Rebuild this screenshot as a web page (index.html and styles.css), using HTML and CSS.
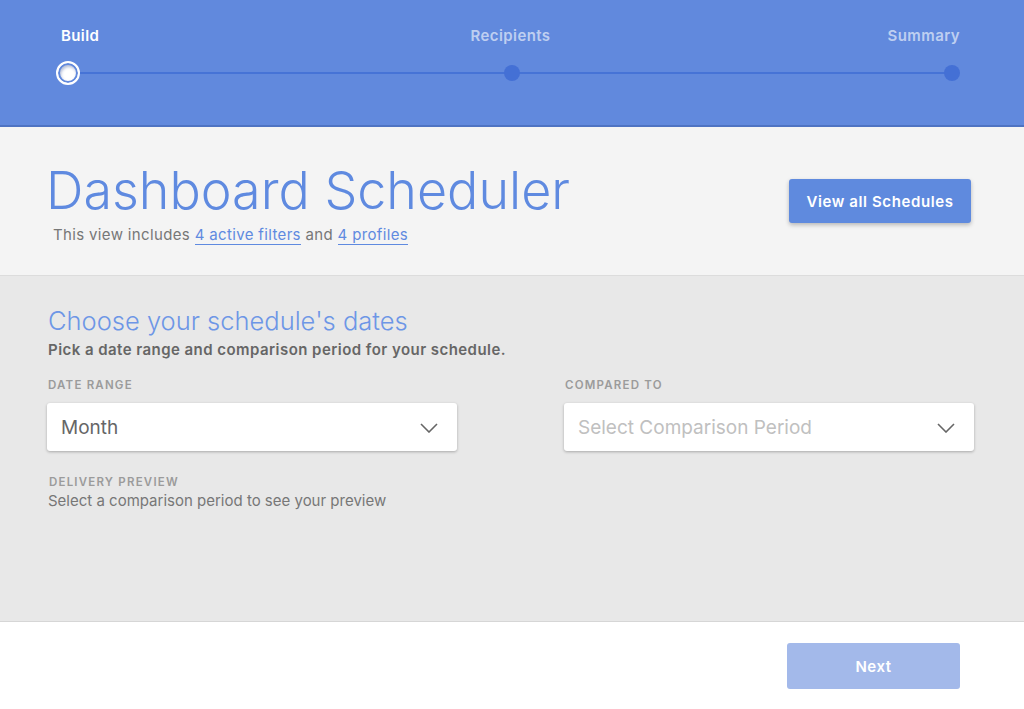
FILE: index.html
```html
<!DOCTYPE html>
<html lang="en">
  <head>
    <meta charset="UTF-8" />
    <meta name="viewport" content="width=device-width, initial-scale=1.0" />
    <title>Dashboard Scheduler</title>
    <link rel="stylesheet" href="styles.css">
  </head>
  <body>
    <!-- Stepper Header -->
    <div class="stepper">
      <div class="step-labels">
        <span class="step-label active">Build</span>
        <span class="step-label">Recipients</span>
        <span class="step-label">Summary</span>
      </div>
      <div class="step-track">
        <span class="step-dot current"></span>
        <span class="step-dot"></span>
        <span class="step-dot"></span>
      </div>
    </div>

    <!-- Title Section -->
    <div class="title-bar">
      <div class="title-text">
        <h1>Dashboard Scheduler</h1>
        <p class="includes">
          This view includes <a href="#">4 active filters</a> and
          <a href="#">4 profiles</a>
        </p>
      </div>
      <button class="btn-primary">View all Schedules</button>
    </div>

    <!-- Dates Section -->
    <div class="dates">
      <h2>Choose your schedule's dates</h2>
      <p class="dates-sub">Pick a date range and comparison period for your schedule.</p>
      <div class="fields">
        <div class="field">
          <label class="field-label">Date Range</label>
          <div class="select">
            <span>Month</span>
            <svg class="chevron" width="18" height="10" viewBox="0 0 18 10">
              <path d="M1 1 L9 9 L17 1" fill="none" stroke="#666" stroke-width="1.6" />
            </svg>
          </div>
        </div>
        <div class="field">
          <label class="field-label">Compared To</label>
          <div class="select placeholder">
            <span>Select Comparison Period</span>
            <svg class="chevron" width="18" height="10" viewBox="0 0 18 10">
              <path d="M1 1 L9 9 L17 1" fill="none" stroke="#666" stroke-width="1.6" />
            </svg>
          </div>
        </div>
      </div>
      <div class="preview">
        <div class="field-label">Delivery Preview</div>
        <p>Select a comparison period to see your preview</p>
      </div>
    </div>

    <!-- Footer -->
    <div class="footer">
      <button class="btn-next">Next</button>
    </div>
  </body>
</html>
```

FILE: styles.css
```css
body {
  font-family: "Inter", "Open Sans", sans-serif;
  margin: 0;
  padding: 0;
  background: #fff;
  color: #666;
  overflow: hidden;
}
.stepper {
  background: #6189dd;
  border-bottom: 2px solid #4e73c2;
  height: 127px;
  padding: 0 64px 0 56px;
  box-sizing: border-box;
  padding-top: 26px;
}
.step-labels {
  display: grid;
  grid-template-columns: 1fr auto 1fr;
  padding-left: 5px;
  height: 20px;
}
.step-labels .step-label:last-child {
  justify-self: end;
}
.step-label {
  font-size: 15px;
  font-weight: 600;
  line-height: 20px;
  letter-spacing: 0.4px;
  color: rgba(255, 255, 255, 0.6);
}
.step-label.active {
  color: #fff;
}
.step-track {
  position: relative;
  display: flex;
  justify-content: space-between;
  align-items: center;
  height: 24px;
  margin-top: 15px;
}
.step-track::before {
  content: "";
  position: absolute;
  left: 12px;
  right: 8px;
  top: 11px;
  height: 2px;
  background: #4673d6;
}
.step-dot {
  position: relative;
  width: 16px;
  height: 16px;
  border-radius: 50%;
  background: #4470d5;
}
.step-dot.current {
  width: 20px;
  height: 20px;
  background: #fff;
  border: 2px solid #fff;
  box-shadow: inset 0 0 0 2px #6189dd, inset 1px 2px 3px 2px rgba(40, 70, 140, 0.35);
}
.title-bar {
  background: #f4f4f4;
  border-bottom: 1px solid #dcdcdc;
  height: 149px;
  box-sizing: border-box;
  display: flex;
  justify-content: space-between;
  align-items: flex-start;
  padding: 0 53px 0 48px;
}
h1 {
  font-size: 52px;
  font-weight: 300;
  color: #5f8ae0;
  margin: 31px 0 0 -2px;
  line-height: 66px;
}
.includes {
  margin: 1px 0 0 5px;
  font-size: 15px;
  line-height: 20px;
  letter-spacing: 0.35px;
  color: #777;
}
.includes a {
  color: #5f8ae0;
  text-decoration: none;
  border-bottom: 1px solid #5f8ae0;
}
.btn-primary {
  margin-top: 52px;
  width: 182px;
  height: 44px;
  background: #5f8ade;
  color: #fff;
  border: none;
  border-radius: 3px;
  font-family: inherit;
  font-size: 15px;
  font-weight: 600;
  letter-spacing: 0.6px;
  box-shadow: 0 2px 4px rgba(0, 0, 0, 0.25);
  cursor: pointer;
}
.dates {
  background: #e8e8e8;
  border-bottom: 1px solid #d6d6d6;
  height: 346px;
  box-sizing: border-box;
  padding: 29px 50px 0 48px;
}
h2 {
  font-size: 25.5px;
  font-weight: 300;
  color: #6d96e6;
  margin: 0;
  line-height: 32px;
}
.dates-sub {
  margin: 3px 0 0 0;
  font-size: 15px;
  font-weight: 600;
  letter-spacing: 0.45px;
  color: #666;
  line-height: 20px;
}
.fields {
  display: grid;
  grid-template-columns: 410px 410px;
  justify-content: space-between;
  margin-top: 18px;
  margin-left: -1px;
}
.field-label {
  display: block;
  font-size: 11.5px;
  font-weight: 600;
  text-transform: uppercase;
  letter-spacing: 1.2px;
  color: #9b9b9b;
  line-height: 14px;
  padding-left: 1px;
}
.select {
  margin-top: 11px;
  height: 48px;
  background: #fff;
  border-radius: 3px;
  box-shadow: 0 1px 3px rgba(0, 0, 0, 0.28);
  display: flex;
  justify-content: space-between;
  align-items: center;
  padding: 0 19px 0 14px;
  font-size: 19px;
  color: #666;
}
.select.placeholder {
  color: #c0c0c0;
}
.chevron {
  margin-top: 1px;
}
.preview {
  margin-top: 24px;
}
.preview p {
  margin: 2px 0 0 0;
  font-size: 15px;
  color: #777;
  line-height: 20px;
}
.footer {
  display: flex;
  justify-content: flex-end;
  padding: 21px 64px 0 0;
}
.btn-next {
  width: 173px;
  height: 46px;
  background: #a3b9ea;
  color: #fff;
  border: none;
  border-radius: 3px;
  font-family: inherit;
  font-size: 15px;
  font-weight: 600;
  letter-spacing: 0.5px;
}
```
